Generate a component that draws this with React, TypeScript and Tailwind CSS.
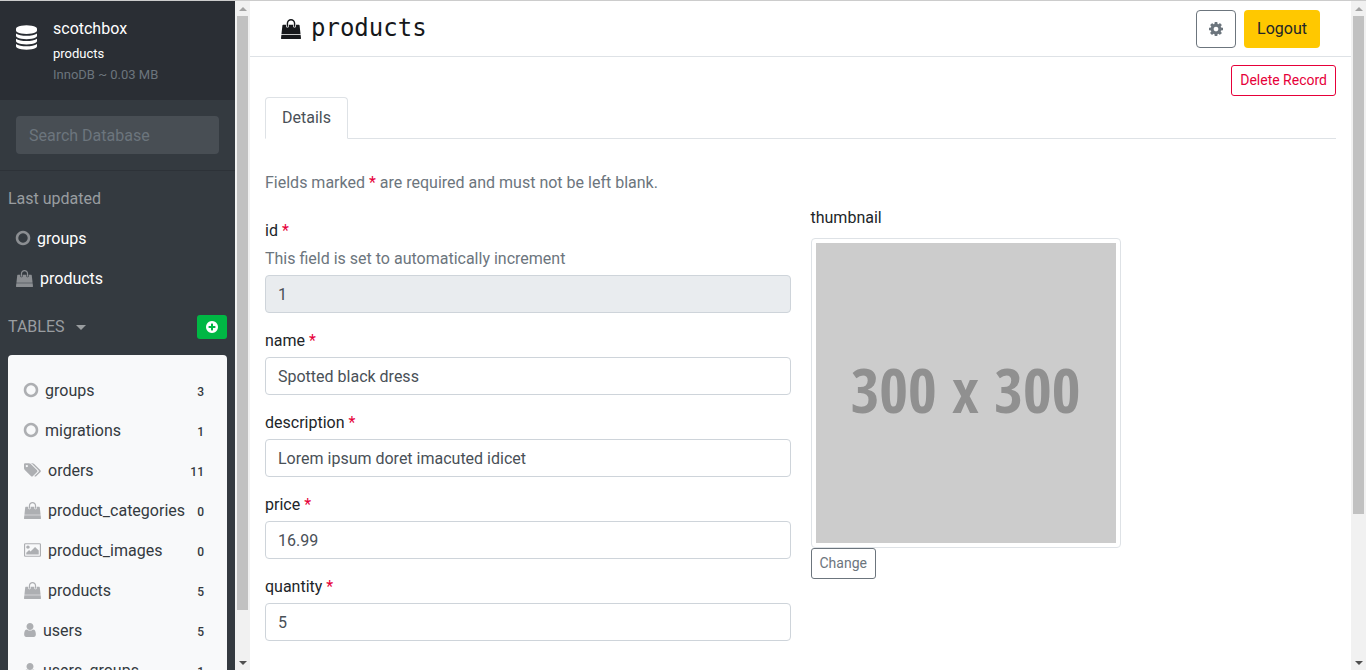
import type { ReactNode } from "react";

type IconName = "database" | "circle" | "bag" | "tags" | "picture" | "user" | "cog" | "plus";

const icons: Record<IconName, { box: string; path: string; size: string }> = {
  database: {
    box: "128 0 1536 1792",
    size: "w-[21px] h-[25px]",
    path: "M896 768q237 0 443-43t325-127v170q0 69-103 128t-280 93.5-385 34.5-385-34.5-280-93.5-103-128v-170q119 84 325 127t443 43zm0 768q237 0 443-43t325-127v170q0 69-103 128t-280 93.5-385 34.5-385-34.5-280-93.5-103-128v-170q119 84 325 127t443 43zm0-384q237 0 443-43t325-127v170q0 69-103 128t-280 93.5-385 34.5-385-34.5-280-93.5-103-128v-170q119 84 325 127t443 43zm0-1152q208 0 385 34.5t280 93.5 103 128v128q0 69-103 128t-280 93.5-385 34.5-385-34.5-280-93.5-103-128v-128q0-69 103-128t280-93.5 385-34.5z",
  },
  circle: {
    box: "128 128 1536 1536",
    size: "w-3.5 h-3.5",
    path: "M896 382q-140 0-258 69t-187 187-69 258 69 258 187 187 258 69 258-69 187-187 69-258-69-258-187-187-258-69zm798 514q0 217-107 400.5t-290.5 290.5-400.5 107-400.5-107-290.5-290.5-107-400.5 107-400.5 290.5-290.5 400.5-107 400.5 107 290.5 290.5 107 400.5z",
  },
  bag: {
    box: "0 0 1792 1792",
    size: "w-[17px] h-[17px]",
    path: "M1757 1408l35 313q3 28-16 50-19 21-48 21h-1664q-29 0-48-21-19-22-16-50l35-313h1722zm-93-839l86 775h-1708l86-775q3-24 21-40.5t43-16.5h256v128q0 53 37.5 90.5t90.5 37.5 90.5-37.5 37.5-90.5v-128h384v128q0 53 37.5 90.5t90.5 37.5 90.5-37.5 37.5-90.5v-128h256q25 0 43 16.5t21 40.5zm-384-185v256q0 26-19 45t-45 19-45-19-19-45v-256q0-106-75-181t-181-75-181 75-75 181v256q0 26-19 45t-45 19-45-19-19-45v-256q0-159 112.5-271.5t271.5-112.5 271.5 112.5 112.5 271.5z",
  },
  tags: {
    box: "0 128 1920 1536",
    size: "w-[17px] h-3.5",
    path: "M448 448q0-53-37.5-90.5t-90.5-37.5-90.5 37.5-37.5 90.5 37.5 90.5 90.5 37.5 90.5-37.5 37.5-90.5zm1067 576q0 53-37 90l-491 492q-39 37-91 37-53 0-90-37l-715-716q-38-37-64.5-101t-26.5-117v-416q0-52 38-90t90-38h416q53 0 117 26.5t102 64.5l715 714q37 39 37 91zm384 0q0 53-37 90l-491 492q-39 37-91 37-36 0-59-14t-53-45l470-470q37-37 37-90 0-52-37-91l-715-714q-38-38-102-64.5t-117-26.5h224q53 0 117 26.5t102 64.5l715 714q37 39 37 91z",
  },
  picture: {
    box: "0 128 1920 1536",
    size: "w-[17px] h-3.5",
    path: "M640 576q0 80-56 136t-136 56-136-56-56-136 56-136 136-56 136 56 56 136zm1024 384v448h-1408v-192l320-320 160 160 512-512zm96-704h-1600q-13 0-22.5 9.5t-9.5 22.5v1216q0 13 9.5 22.5t22.5 9.5h1600q13 0 22.5-9.5t9.5-22.5v-1216q0-13-9.5-22.5t-22.5-9.5zm160 32v1216q0 66-47 113t-113 47h-1600q-66 0-113-47t-47-113v-1216q0-66 47-113t113-47h1600q66 0 113 47t47 113z",
  },
  user: {
    box: "256 128 1280 1536",
    size: "w-3 h-3.5",
    path: "M1536 1399q0 109-62.5 187t-150.5 78h-854q-88 0-150.5-78t-62.5-187q0-85 8.5-160.5t31.5-152 58.5-131 94-89 134.5-34.5q131 128 313 128t313-128q76 0 134.5 34.5t94 89 58.5 131 31.5 152 8.5 160.5zm-256-887q0 159-112.5 271.5t-271.5 112.5-271.5-112.5-112.5-271.5 112.5-271.5 271.5-112.5 271.5 112.5 112.5 271.5z",
  },
  cog: {
    box: "128 128 1536 1536",
    size: "w-3.5 h-3.5",
    path: "M1152 896q0-106-75-181t-181-75-181 75-75 181 75 181 181 75 181-75 75-181zm512-109v222q0 12-8 23t-20 13l-185 28q-19 54-39 91 35 50 107 138 10 12 10 25t-9 23q-27 37-99 108t-94 71q-12 0-26-9l-138-108q-44 23-91 38-16 136-29 186-7 28-36 28h-222q-14 0-24.5-8.5t-11.5-21.5l-28-184q-49-16-90-37l-141 107q-10 9-25 9-14 0-25-11-126-114-165-168-7-10-7-23 0-12 8-23 15-21 51-66.5t54-70.5q-27-50-41-99l-183-27q-13-2-21-12.5t-8-23.5v-222q0-12 8-23t19-13l186-28q14-46 39-92-40-57-107-138-10-12-10-24 0-10 9-23 26-36 98.5-107.5t94.5-71.5q13 0 26 10l138 107q44-23 91-38 16-136 29-186 7-28 36-28h222q14 0 24.5 8.5t11.5 21.5l28 184q49 16 90 37l142-107q9-9 24-9 13 0 25 10 129 119 165 170 7 8 7 22 0 12-8 23-15 21-51 66.5t-54 70.5q26 50 41 98l183 28q13 2 21 12.5t8 23.5z",
  },
  plus: {
    box: "128 128 1536 1536",
    size: "w-3 h-3",
    path: "M1344 960v-128q0-26-19-45t-45-19h-256v-256q0-26-19-45t-45-19h-128q-26 0-45 19t-19 45v256h-256q-26 0-45 19t-19 45v128q0 26 19 45t45 19h256v256q0 26 19 45t45 19h128q26 0 45-19t19-45v-256h256q26 0 45-19t19-45zm320-64q0 209-103 385.5t-279.5 279.5-385.5 103-385.5-103-279.5-279.5-103-385.5 103-385.5 279.5-279.5 385.5-103 385.5 103 279.5 279.5 103 385.5z",
  },
};

function Icon({ name, size, className = "" }: { name: IconName; size?: string; className?: string }) {
  const icon = icons[name];
  return (
    <svg viewBox={icon.box} fill="currentColor" aria-hidden="true" className={`shrink-0 overflow-visible ${size ?? icon.size} ${className}`}>
      <path d={icon.path} />
    </svg>
  );
}

function ScrollRail({ thumb }: { thumb: number }) {
  return (
    <div aria-hidden="true" className="flex w-[15px] shrink-0 flex-col items-center bg-[#f1f1f1]">
      <div className="flex h-[15px] shrink-0 items-center justify-center">
        <svg viewBox="0 0 8 4" className="h-1 w-2 fill-[#a3a3a3]"><path d="M0 4 4 0l4 4z" /></svg>
      </div>
      <div className="flex w-[11px] grow flex-col">
        <div className="w-full bg-[#c1c1c1]" style={{ height: `${thumb}%` }} />
      </div>
      <div className="flex h-[15px] shrink-0 items-center justify-center">
        <svg viewBox="0 0 8 4" className="h-1 w-2 fill-[#505050]"><path d="M0 0h8L4 4z" /></svg>
      </div>
    </div>
  );
}

const recent: { name: string; icon: IconName }[] = [
  { name: "groups", icon: "circle" },
  { name: "products", icon: "bag" },
];

const tables: { name: string; icon: IconName; count: number }[] = [
  { name: "groups", icon: "circle", count: 3 },
  { name: "migrations", icon: "circle", count: 1 },
  { name: "orders", icon: "tags", count: 11 },
  { name: "product_categories", icon: "bag", count: 0 },
  { name: "product_images", icon: "picture", count: 0 },
  { name: "products", icon: "bag", count: 5 },
  { name: "users", icon: "user", count: 5 },
  { name: "users_groups", icon: "user", count: 1 },
];

function Sidebar() {
  return (
    <aside className="w-[235px] shrink-0 overflow-hidden bg-[#343a40] text-white">
      <div className="flex gap-4 bg-[#2a2e34] px-4 pt-4 pb-[15px]">
        <Icon name="database" className="mt-2" />
        <div>
          <div className="leading-6">scotchbox</div>
          <div className="mt-0.5 text-[13px] leading-[22px]">products</div>
          <div className="text-[13px] leading-5 text-[#6c757d]">InnoDB ~ 0.03 MB</div>
        </div>
      </div>
      <div className="border-b border-[#2d3238] p-4">
        <input
          type="search"
          aria-label="Search Database"
          placeholder="Search Database"
          className="block h-[38px] w-full rounded bg-[#484e54] px-[13px] text-white placeholder:text-[#6c757d]"
        />
      </div>
      <div className="mt-4 px-2 leading-6 text-[#999da0]">Last updated</div>
      <nav aria-label="Last updated" className="mt-2">
        {recent.map((item) => (
          <a key={item.name} href="#" className="flex h-10 items-center gap-[7px] px-4">
            <Icon name={item.icon} className="mb-0.5 text-[#8b8e92]" />
            {item.name}
          </a>
        ))}
      </nav>
      <div className="mt-4 flex h-6 items-center justify-between px-2">
        <button type="button" className="flex items-center gap-[11px] text-[#999da0]">
          TABLES
          <svg viewBox="0 0 10 5" aria-hidden="true" className="h-[5px] w-2.5 fill-current"><path d="M0 0h10L5 5z" /></svg>
        </button>
        <button type="button" aria-label="Add table" className="flex h-6 w-[30px] items-center justify-center rounded-[3px] bg-[#00b744]">
          <Icon name="plus" />
        </button>
      </div>
      <nav aria-label="Tables" className="mx-2 mt-4 rounded bg-[#f8f9fa] py-4 text-[#343a40]">
        {tables.map((table) => (
          <a key={table.name} href="#" className="flex h-10 items-center gap-[7px] pr-[23px] pl-4">
            <Icon name={table.icon} className="mb-0.5 text-[#adafb2]" />
            {table.name}
            <span className="ml-auto pt-0.5 text-xs font-medium">{table.count}</span>
          </a>
        ))}
      </nav>
    </aside>
  );
}

function Star() {
  return <span className="text-[#e60039]">*</span>;
}

function Field({ name, value, help, readOnly }: { name: string; value: string; help?: ReactNode; readOnly?: boolean }) {
  return (
    <div>
      <label htmlFor={name} className="block leading-6">
        {name} <Star />
      </label>
      {help && <p className="mt-1 leading-6 text-[#6c757d]">{help}</p>}
      <input
        id={name}
        type="text"
        defaultValue={value}
        readOnly={readOnly}
        className="mt-1 block h-[38px] w-full rounded border border-[#ced4da] bg-white px-3 text-[#495057] read-only:bg-[#e9ecef]"
      />
    </div>
  );
}

export default function App() {
  return (
    <div className="flex h-screen overflow-hidden border-t border-[#cccccc] bg-white font-[Roboto,sans-serif] text-base text-[#212529]">
      <Sidebar />
      <ScrollRail thumb={93} />
      <main className="min-w-0 grow overflow-hidden">
        <header className="flex h-14 items-center justify-between border-b border-[#dee2e6] px-[31px]">
          <h1 className="flex items-center gap-2.5 font-['DejaVu_Sans_Mono',monospace] text-2xl leading-8 text-[#16181b]">
            <Icon name="bag" size="h-5 w-5" />
            <span className="pb-0.5">products</span>
          </h1>
          <div className="flex gap-2">
            <button type="button" aria-label="Settings" className="flex h-[38px] w-10 items-center justify-center rounded border border-[#6c757d] text-[#6c757d]">
              <Icon name="cog" />
            </button>
            <button type="button" className="h-[38px] rounded bg-[#ffc800] px-[13px]">Logout</button>
          </div>
        </header>
        <div className="px-[15px] pt-2">
          <div className="flex justify-end">
            <button type="button" className="rounded-[3px] border border-[#e60039] px-2 py-1 text-sm leading-[21px] text-[#e60039]">Delete Record</button>
          </div>
          <div role="tablist" className="mt-px flex border-b border-[#dee2e6]">
            <button type="button" role="tab" aria-selected="true" className="-mb-px h-[42px] rounded-t border border-[#dee2e6] border-b-white bg-white px-4 text-[#495057]">
              Details
            </button>
          </div>
          <p className="mt-8 leading-6 text-[#6c757d]">
            Fields marked <Star /> are required and must not be left blank.
          </p>
          <div className="mt-[11px] grid grid-cols-2 gap-5">
            <form className="flex flex-col gap-4 pt-[13px]">
              <Field name="id" value="1" help="This field is set to automatically increment" readOnly />
              <Field name="name" value="Spotted black dress" />
              <Field name="description" value="Lorem ipsum doret imacuted idicet" />
              <Field name="price" value="16.99" />
              <Field name="quantity" value="5" />
            </form>
            <div className="flex flex-col items-start">
              <div className="leading-6">thumbnail</div>
              <div className="mt-2 rounded border border-[#dee2e6] p-1">
                <div className="flex size-[300px] items-center justify-center bg-[#cccccc] pb-2 font-['Open_Sans_Condensed','Noto_Sans_Condensed','Roboto_Condensed',sans-serif] text-[62px] font-bold text-[#909090]">
                  300 x 300
                </div>
              </div>
              <button type="button" className="rounded-[3px] border border-[#6c757d] px-2 py-1 text-sm leading-[21px] text-[#6c757d]">Change</button>
            </div>
          </div>
        </div>
      </main>
      <ScrollRail thumb={78} />
    </div>
  );
}
